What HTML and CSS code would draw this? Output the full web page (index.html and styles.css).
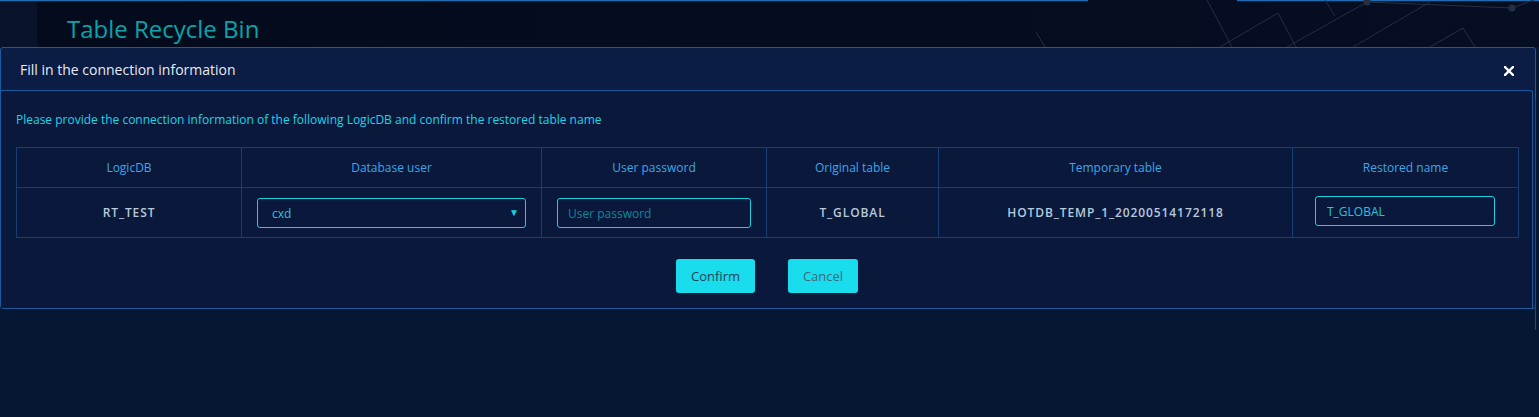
FILE: index.html
```html
<!DOCTYPE html>
<html lang="en">
<head>
<meta charset="utf-8">
<title>Table Recycle Bin</title>
<link rel="stylesheet" href="styles.css">
</head>
<body>
<div class="page">
  <div class="topbar">
    <div class="sidebar"></div>
    <div class="header">
      <h1 class="page-title">Table Recycle Bin</h1>
    </div>
  </div>
  <svg class="deco" width="1539" height="47" viewBox="0 0 1539 47">
    <line x1="0" y1="0.5" x2="1088" y2="0.5" stroke="#1f6db0" stroke-width="1.5"/>
    <line x1="1237" y1="0.5" x2="1539" y2="0.5" stroke="#1f6db0" stroke-width="1.5"/>
    <g stroke="#262f42" stroke-width="1" fill="none">
      <polyline points="1036,32 1045,47"/>
      <polyline points="1207,0 1232,47"/>
      <polyline points="1220,47 1278,13 1296,47"/>
      <polyline points="1287,47 1367,2"/>
      <polyline points="1325,0 1335,16"/>
      <polyline points="1353,47 1430,2"/>
      <polyline points="1367,2 1512,8 1539,-2"/>
      <polyline points="1430,47 1463,28 1475,47"/>
    </g>
    <circle cx="1367" cy="2" r="3.5" fill="#262f42"/>
    <circle cx="1512" cy="8" r="3.5" fill="#262f42"/>
  </svg>

  <div class="modal">
    <div class="modal-header">
      <span class="modal-title">Fill in the connection information</span>
      <span class="modal-close" aria-label="close">
        <svg width="10" height="10" viewBox="0 0 10 10"><path d="M1 1 L9 9 M9 1 L1 9" stroke="#ffffff" stroke-width="2.4" stroke-linecap="square"/></svg>
      </span>
    </div>
    <div class="modal-body">
      <p class="desc">Please provide the connection information of the following LogicDB and confirm the restored table name</p>
      <table class="grid">
        <colgroup>
          <col class="c1"><col class="c2"><col class="c3"><col class="c4"><col class="c5"><col class="c6">
        </colgroup>
        <thead>
          <tr>
            <th>LogicDB</th>
            <th>Database user</th>
            <th>User password</th>
            <th>Original table</th>
            <th>Temporary table</th>
            <th>Restored name</th>
          </tr>
        </thead>
        <tbody>
          <tr>
            <td>RT_TEST</td>
            <td>
              <div class="select"><span>cxd</span><span class="caret">▼</span></div>
            </td>
            <td><input class="field pwd" type="text" placeholder="User password"></td>
            <td>T_GLOBAL</td>
            <td>HOTDB_TEMP_1_20200514172118</td>
            <td><input class="field name" type="text" value="T_GLOBAL"></td>
          </tr>
        </tbody>
      </table>
      <div class="actions">
        <button class="btn confirm">Confirm</button>
        <button class="btn cancel">Cancel</button>
      </div>
    </div>
  </div>
  <div class="edge"></div>
</div>
</body>
</html>
```

FILE: styles.css
```css
* { box-sizing: border-box; }
html, body {
  margin: 0;
  padding: 0;
  background: #061733;
  font-family: "Open Sans", "Noto Sans", sans-serif;
}
.page {
  position: relative;
  width: 1539px;
  height: 417px;
  overflow: hidden;
  background: #061733;
}
.topbar {
  display: flex;
  height: 47px;
}
.sidebar {
  width: 37px;
  background: #09142c;
}
.header {
  flex: 1;
  background: linear-gradient(90deg, #030b1c 0%, #040d20 60%, #050e22 100%);
  padding-left: 30px;
}
.page-title {
  margin: 0;
  padding-top: 12px;
  font-size: 24px;
  font-weight: 400;
  line-height: 34px;
  color: #0aa3ab;
}
.deco {
  position: absolute;
  left: 0;
  top: 0;
}
.modal {
  position: absolute;
  left: 0;
  top: 47px;
  width: 1536px;
  height: 262px;
  border: 1px solid #1b5a9e;
  border-radius: 3px;
  background: #0b1c45;
  display: flex;
  flex-direction: column;
}
.modal-header {
  height: 42px;
  display: flex;
  align-items: center;
  justify-content: space-between;
  padding: 0 21px 0 19px;
}
.modal-title {
  font-size: 14px;
  color: #e6ebf2;
}
.modal-close {
  display: flex;
  margin-top: 4px;
}
.modal-body {
  flex: 1;
  background: #09183b;
  border-top: 1px solid #1b5a9e;
  border-right: 1px solid #1b5a9e;
  border-radius: 0 3px 0 0;
  margin-right: 2px;
  padding: 20px 0 0 15px;
}
.desc {
  margin: 0 0 19px 0;
  font-size: 12px;
  line-height: 17px;
  color: #1bd6e8;
}
.grid {
  border-collapse: collapse;
  width: 1502px;
  table-layout: fixed;
}
.grid .c1 { width: 225px; }
.grid .c2 { width: 300px; }
.grid .c3 { width: 225px; }
.grid .c4 { width: 172px; }
.grid .c5 { width: 354px; }
.grid .c6 { width: 226px; }
.grid th, .grid td {
  border: 1px solid #143f76;
  text-align: center;
  font-size: 12px;
  padding: 0;
}
.grid th {
  height: 40px;
  font-weight: 400;
  color: #3ea7e9;
}
.grid td {
  height: 50px;
  font-weight: 600;
  color: #b6cbdc;
  letter-spacing: 0.9px;
}
.select {
  margin: 1px 15px 0;
  height: 30px;
  border: 1px solid #19cfe2;
  border-radius: 3px;
  display: flex;
  align-items: center;
  justify-content: space-between;
  padding: 0 6px 0 14px;
  font-size: 12px;
  font-weight: 400;
  letter-spacing: 0;
  color: #2fc3dc;
}
.caret {
  font-size: 10px;
  color: #19cfe2;
  margin-top: -3px;
}
.field {
  display: block;
  height: 30px;
  border: 1px solid #19cfe2;
  border-radius: 3px;
  background: transparent;
  font-family: "Open Sans", "Noto Sans", sans-serif;
  font-size: 12px;
  padding: 0 10px;
  outline: none;
}
.field.pwd {
  width: 194px;
  margin: 1px 15px 0;
  color: #2fc3dc;
}
.field.pwd::placeholder { color: #0d8a99; }
.field.name {
  width: 180px;
  margin: -3px 0 0 22px;
  color: #22c6df;
  padding-left: 11px;
}
.actions {
  display: flex;
  justify-content: center;
  gap: 33px;
  width: 1502px;
  margin-top: 21px;
}
.btn {
  height: 34px;
  border: none;
  border-radius: 3px;
  background: #19dcec;
  font-family: "Open Sans", "Noto Sans", sans-serif;
  font-size: 13px;
  padding: 0;
  cursor: pointer;
}
.btn.confirm { width: 79px; color: #21435a; }
.btn.cancel { width: 70px; color: #3d6b82; }
.edge {
  position: absolute;
  left: 1535px;
  top: 100px;
  width: 1px;
  height: 230px;
  background: #174a85;
}
```
